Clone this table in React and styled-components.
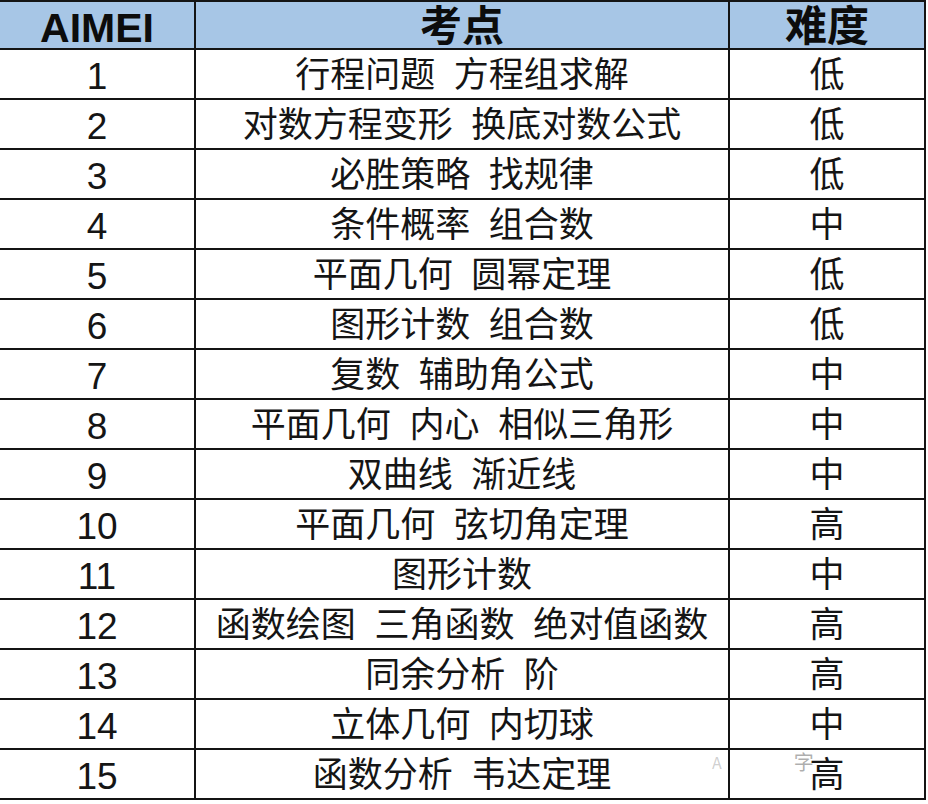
import React from "react";
import styled, { createGlobalStyle } from "styled-components";

const GlobalStyle = createGlobalStyle`
  html, body {
    margin: 0;
    padding: 0;
    background: #ffffff;
  }
  body {
    font-family: "Liberation Sans", "Noto Sans CJK SC", sans-serif;
    color: #111;
  }
`;

const Wrap = styled.div`
  position: relative;
  width: 926px;
`;

const Table = styled.div`
  display: grid;
  grid-template-columns: 196px 534px 196px;
  width: 926px;
  border-top: 2px solid #141414;
`;

const Cell = styled.div`
  box-sizing: border-box;
  height: ${(p) => (p.$head ? 48 : 50)}px;
  border-right: 2px solid #141414;
  border-bottom: 2px solid #141414;
  display: flex;
  align-items: center;
  justify-content: center;
  background: ${(p) => (p.$head ? "#a7c6e6" : "#ffffff")};
  white-space: nowrap;
`;

const HeadText = styled.span`
  font-family: "Liberation Sans", "Noto Sans CJK SC", sans-serif;
  font-weight: 700;
  font-size: ${(p) => (p.$latin ? 41 : 42)}px;
  line-height: 1;
  color: #0c0c0c;
  margin-top: ${(p) => (p.$latin ? 6 : 3)}px;
`;

const Num = styled.span`
  font-family: "Liberation Sans", Arial, sans-serif;
  font-size: 37px;
  line-height: 1;
  color: #151515;
  padding-top: 5px;
`;

const Topic = styled.span`
  font-family: "Liberation Sans", "Noto Sans CJK SC", sans-serif;
  font-size: 35px;
  line-height: 1;
  word-spacing: 9px;
  color: #151515;
`;

const Watermark = styled.div`
  position: absolute;
  left: 712px;
  top: 752px;
  display: flex;
  align-items: center;
  gap: 72px;
  font-family: "Noto Sans CJK SC", sans-serif;
  font-size: 16px;
  line-height: 1;
  color: rgba(150, 150, 150, 0.5);
  pointer-events: none;
`;

const Mark = styled.span`
  font-size: ${(p) => p.$size}px;
  color: ${(p) => p.$color};
`;

const rows = [
  ["行程问题 方程组求解", "低"],
  ["对数方程变形 换底对数公式", "低"],
  ["必胜策略 找规律", "低"],
  ["条件概率 组合数", "中"],
  ["平面几何 圆幂定理", "低"],
  ["图形计数 组合数", "低"],
  ["复数 辅助角公式", "中"],
  ["平面几何 内心 相似三角形", "中"],
  ["双曲线 渐近线", "中"],
  ["平面几何 弦切角定理", "高"],
  ["图形计数", "中"],
  ["函数绘图 三角函数 绝对值函数", "高"],
  ["同余分析 阶", "高"],
  ["立体几何 内切球", "中"],
  ["函数分析 韦达定理", "高"],
];

export default function App() {
  return (
    <>
      <GlobalStyle />
      <Wrap>
        <Table>
          <Cell $head>
            <HeadText $latin>AIMEI</HeadText>
          </Cell>
          <Cell $head>
            <HeadText>考点</HeadText>
          </Cell>
          <Cell $head>
            <HeadText>难度</HeadText>
          </Cell>
          {rows.map(([topic, level], i) => (
            <React.Fragment key={i}>
              <Cell>
                <Num>{i + 1}</Num>
              </Cell>
              <Cell>
                <Topic>{topic}</Topic>
              </Cell>
              <Cell>
                <Topic>{level}</Topic>
              </Cell>
            </React.Fragment>
          ))}
        </Table>
        <Watermark>
          <Mark $size={16} $color="rgba(150,150,150,0.45)">A</Mark>
          <Mark $size={20} $color="rgba(120,120,120,0.6)">字</Mark>
        </Watermark>
      </Wrap>
    </>
  );
}
